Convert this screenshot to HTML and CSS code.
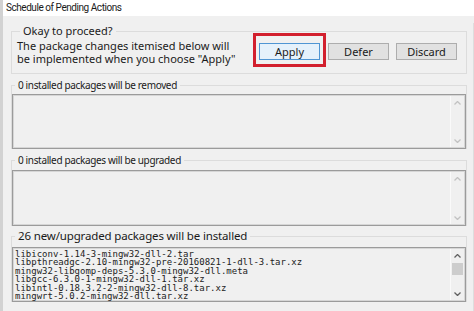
FILE: index.html
```html
<!DOCTYPE html>
<html lang="en">

<head>
    <meta charset="UTF-8">
    <meta name="viewport" content="width=device-width, initial-scale=1.0">
    <title>Schedule of Pending Actions</title>
    <link rel="stylesheet" href="styles.css">
</head>

<body>
    <div class="window">
        <div class="title">Schedule of Pending Actions</div>
        <div class="dialog">
            <fieldset class="group confirm">
                <legend>Okay to proceed?</legend>
                <div class="confirm-row">
                    <p class="prompt">The package changes itemised below will<br>be implemented when you choose "Apply"</p>
                    <div class="actions">
                        <button class="btn apply">Apply</button>
                        <button class="btn">Defer</button>
                        <button class="btn">Discard</button>
                    </div>
                </div>
            </fieldset>

            <fieldset class="group list-group removed">
                <legend>0 installed packages will be removed</legend>
                <div class="listbox">
                    <div class="items"></div>
                    <div class="scrollbar disabled">
                        <span class="arrow"><svg width="7" height="4" viewBox="0 0 7 4"><polyline points="0.5,3.5 3.5,0.5 6.5,3.5" /></svg></span>
                        <span class="track"></span>
                        <span class="arrow"><svg width="7" height="4" viewBox="0 0 7 4"><polyline points="0.5,0.5 3.5,3.5 6.5,0.5" /></svg></span>
                    </div>
                </div>
            </fieldset>

            <fieldset class="group list-group upgraded">
                <legend>0 installed packages will be upgraded</legend>
                <div class="listbox">
                    <div class="items"></div>
                    <div class="scrollbar disabled">
                        <span class="arrow"><svg width="7" height="4" viewBox="0 0 7 4"><polyline points="0.5,3.5 3.5,0.5 6.5,3.5" /></svg></span>
                        <span class="track"></span>
                        <span class="arrow"><svg width="7" height="4" viewBox="0 0 7 4"><polyline points="0.5,0.5 3.5,3.5 6.5,0.5" /></svg></span>
                    </div>
                </div>
            </fieldset>

            <fieldset class="group list-group installed">
                <legend>26 new/upgraded packages will be installed</legend>
                <div class="listbox">
                    <div class="items mono">
                        <div>libiconv-1.14-3-mingw32-dll-2.tar</div>
                        <div>libpthreadgc-2.10-mingw32-pre-20160821-1-dll-3.tar.xz</div>
                        <div>mingw32-libgomp-deps-5.3.0-mingw32-dll.meta</div>
                        <div>libgcc-6.3.0-1-mingw32-dll-1.tar.xz</div>
                        <div>libintl-0.18.3.2-2-mingw32-dll-8.tar.xz</div>
                        <div>mingwrt-5.0.2-mingw32-dll.tar.xz</div>
                    </div>
                    <div class="scrollbar">
                        <span class="arrow"><svg width="7" height="4" viewBox="0 0 7 4"><polyline points="0.5,3.5 3.5,0.5 6.5,3.5" /></svg></span>
                        <span class="track"><span class="thumb"></span></span>
                        <span class="arrow"><svg width="7" height="4" viewBox="0 0 7 4"><polyline points="0.5,0.5 3.5,3.5 6.5,0.5" /></svg></span>
                    </div>
                </div>
            </fieldset>
        </div>
    </div>
</body>

</html>
```

FILE: styles.css
```css
html,
body {
    margin: 0;
    padding: 0;
    background: #f0f0f0;
}

body {
    font-family: "Noto Sans", "Open Sans", sans-serif;
    color: #1a1a1a;
    width: 474px;
    height: 311px;
    overflow: hidden;
}

.window {
    border-left: 3px solid #d2d2d2;
    height: 311px;
    box-sizing: border-box;
}

.title {
    height: 16px;
    line-height: 15px;
    font-family: Roboto, "Noto Sans", sans-serif;
    font-size: 10px;
    letter-spacing: -0.45px;
    padding-left: 3px;
    background: #ffffff;
}

.dialog {
    padding: 0 6px 0 8px;
    border-right: 1px solid #dedede;
    height: 295px;
    box-sizing: border-box;
}

.group {
    margin: 0;
    border: 1px solid #dcdcdc;
    min-width: 0;
}

.group legend {
    font-size: 11px;
    line-height: 16px;
    padding: 0 3px;
    margin-left: 3px;
}

/* confirmation box */
.confirm {
    margin-top: 7px;
    padding: 0 9px 8px 5px;
}

.confirm-row {
    display: flex;
    align-items: flex-start;
}

.prompt {
    margin: 0;
    font-size: 11px;
    line-height: 13px;
}

.actions {
    margin-left: auto;
    margin-top: 4px;
    display: flex;
}

.btn {
    width: 61px;
    height: 17px;
    padding: 0;
    margin-left: 7px;
    font-family: inherit;
    font-size: 11px;
    line-height: 15px;
    color: #1a1a1a;
    background: #e1e1e1;
    border: 1px solid #adadad;
}

.btn.apply {
    position: relative;
    margin-left: 0;
    margin-right: 1px;
    background: #e5f1fb;
    border-color: #4f95d3;
}

/* red annotation frame around the Apply button */
.btn.apply::after {
    content: "";
    position: absolute;
    top: -11px;
    left: -7px;
    right: -7px;
    bottom: -8px;
    border: 3px solid #d21f2d;
}

/* list boxes */
.list-group {
    padding: 0;
    border-bottom: none;
}

.removed {
    margin-top: 3px;
    padding-top: 1px;
}

.upgraded {
    margin-top: 3px;
    padding-top: 2px;
}

.removed legend,
.upgraded legend {
    font-size: 10px;
    letter-spacing: -0.35px;
}

.installed {
    margin-top: 2px;
    padding-top: 3px;
}

.installed legend {
    font-size: 11.5px;
    letter-spacing: -0.15px;
}

.listbox {
    display: flex;
    height: 55px;
    box-sizing: border-box;
    border: 1px solid #9b9b9b;
    box-shadow: inset 0 0 0 1px #d6d6d6;
    background: #f0f0f0;
}

.upgraded .listbox {
    height: 56px;
}

.items {
    flex: 1;
    padding: 2px 0 0 2px;
    overflow: hidden;
}

.mono {
    font-family: "DejaVu Sans Mono", "Liberation Mono", monospace;
    font-size: 9px;
    line-height: 8.4px;
    color: #222;
    white-space: nowrap;
}

.scrollbar {
    width: 13px;
    margin: 1px 1px 1px 0;
    border-left: 1px solid #fafafa;
    display: flex;
    flex-direction: column;
    background: #f0f0f0;
}

.arrow {
    height: 13px;
    display: flex;
    align-items: center;
    justify-content: center;
}

.arrow svg {
    fill: none;
    stroke: #606060;
    stroke-width: 1.3;
}

.scrollbar.disabled .arrow svg {
    stroke: #c2c2c2;
}

.track {
    flex: 1;
    padding: 0 1px;
}

.thumb {
    display: block;
    height: 12px;
    margin-top: 1px;
    background: #cdcdcd;
}
```
